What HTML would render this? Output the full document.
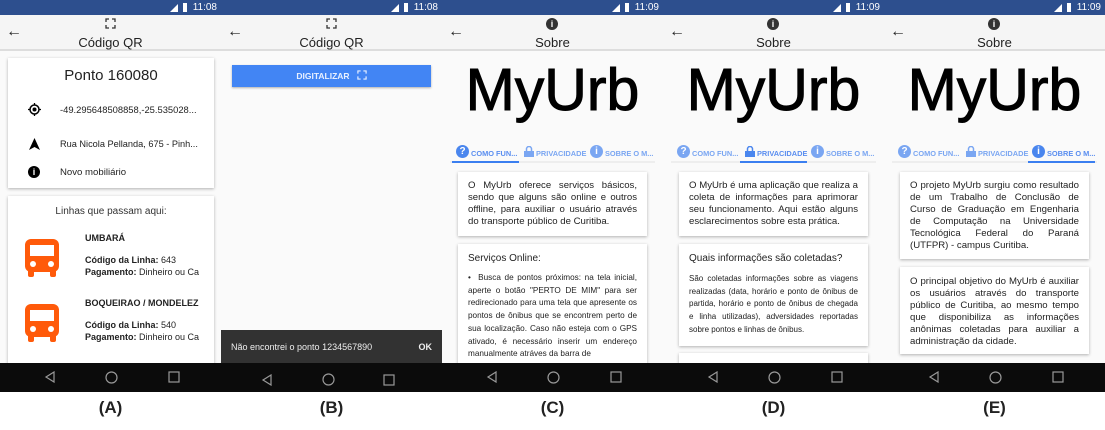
<!DOCTYPE html><html><head><meta charset="utf-8"><style>
*{margin:0;padding:0;box-sizing:border-box}
body{width:1105px;height:430px;background:#fff;font-family:"Liberation Sans",sans-serif;position:relative;overflow:hidden;color:#222}
.p{position:absolute;top:0;width:221px;height:392px;background:#fafafa;overflow:hidden}
.sb{position:absolute;top:0;left:0;right:0;height:15px;background:#2d4f8e;color:#fff;font-size:10px}
.sb .t{position:absolute;right:4px;top:2px}
.sb .sig{position:absolute;right:43px;top:4px;width:0;height:0;border-left:8px solid transparent;border-bottom:8px solid #fff}
.sb .bat{position:absolute;right:34px;top:3px;width:4px;height:9px;background:#fff}
.ab{position:absolute;top:15px;left:0;right:0;height:36px;background:#f5f5f5;border-bottom:2px solid #ddd}
.ab .bk{position:absolute;left:6px;top:8px;font-size:16px}
.ab .ti{position:absolute;left:0;right:0;top:20px;text-align:center;font-size:13px;color:#222}
.ab .ic{position:absolute;left:105px;top:3px;width:11px;height:11px}
.nb{position:absolute;top:363px;left:0;right:0;height:29px;background:#0b0b0b}
.nb svg{position:absolute;top:8px}
.lab{position:absolute;top:398px;width:221px;text-align:center;font-weight:bold;font-size:17px}
.card{position:absolute;background:#fff;box-shadow:0 1px 3px rgba(0,0,0,.3)}
.just{text-align:justify;font-size:9.6px;line-height:12px;color:#222}
.tabs{position:absolute;top:143px;left:8px;right:8px;height:20px;border-bottom:2px solid #eee;font-size:7.4px;color:#5a8ef0;font-weight:bold;white-space:nowrap}
.tabs span{position:absolute;top:6px}
.tabs .ul{position:absolute;top:18px;height:2px;width:67px;background:#3b7ff0}
.ci{position:absolute;top:2px;width:13px;height:13px;border-radius:50%;background:#4a86ee;color:#fff;font-size:10px;text-align:center;line-height:13px;font-weight:bold}
.lk{position:absolute;top:3px;width:10px;height:11px}
.big{position:absolute;top:56px;left:0;right:0;text-align:center;font-size:59px;color:#000;-webkit-text-stroke:1px #000}
</style></head><body>

<!-- Panel A -->
<div class="p" style="left:0">
<div class="sb"><div class="sig"></div><div class="bat"></div><span class="t">11:08</span></div>
<div class="ab"><span class="bk">←</span><svg class="ic" viewBox="0 0 11 11" fill="none" stroke="#333" stroke-width="1.3"><path d="M1 4V1h3M7 1h3v3M10 7v3H7M4 10H1V7"/></svg><div class="ti">Código QR</div></div>
<div class="card" style="left:8px;top:58px;width:206px;height:130px">
<div style="text-align:center;font-size:15px;margin-top:9px">Ponto 160080</div>
<svg style="position:absolute;left:20px;top:45px" width="13" height="13" viewBox="0 0 13 13"><circle cx="6.5" cy="6.5" r="4.5" fill="none" stroke="#000" stroke-width="1.5"/><circle cx="6.5" cy="6.5" r="2" fill="#000"/><path d="M6.5 0v2M6.5 11v2M0 6.5h2M11 6.5h2" stroke="#000" stroke-width="1.3"/></svg>
<div style="position:absolute;left:52px;top:46px;font-size:9.4px;white-space:nowrap">-49.295648508858,-25.535028...</div>
<svg style="position:absolute;left:21px;top:80px" width="11" height="12" viewBox="0 0 11 12"><path d="M5.5 0L11 12L5.5 9L0 12Z" fill="#000"/></svg>
<div style="position:absolute;left:52px;top:81px;font-size:9.2px;white-space:nowrap">Rua Nicola Pellanda, 675 - Pinh...</div>
<div style="position:absolute;left:20px;top:108px;width:12px;height:12px;border-radius:50%;background:#000;color:#fff;font-size:9px;font-weight:bold;text-align:center;line-height:12px">i</div>
<div style="position:absolute;left:52px;top:109px;font-size:9.6px">Novo mobiliário</div>
</div>
<div class="card" style="left:8px;top:196px;width:206px;height:180px">
<div style="text-align:center;font-size:10px;margin-top:10px;color:#333">Linhas que passam aqui:</div>
<svg style="position:absolute;left:17px;top:43px" width="34" height="38" viewBox="0 0 34 38"><rect x="0" y="0" width="34" height="33" rx="6" fill="#ff5a0a"/><rect x="5" y="6" width="24" height="11" fill="#fff"/><circle cx="8" cy="25" r="3" fill="#fff"/><circle cx="26" cy="25" r="3" fill="#fff"/><rect x="3" y="30" width="6" height="8" rx="2" fill="#ff5a0a"/><rect x="25" y="30" width="6" height="8" rx="2" fill="#ff5a0a"/></svg>
<div style="position:absolute;left:77px;top:37px;font-size:9px;font-weight:bold">UMBARÁ</div>
<div style="position:absolute;left:77px;top:58px;font-size:9px;line-height:12px;white-space:nowrap"><b>Código da Linha:</b> 643<br><b>Pagamento:</b> Dinheiro ou Ca</div>
<svg style="position:absolute;left:17px;top:108px" width="34" height="38" viewBox="0 0 34 38"><rect x="0" y="0" width="34" height="33" rx="6" fill="#ff5a0a"/><rect x="5" y="6" width="24" height="11" fill="#fff"/><circle cx="8" cy="25" r="3" fill="#fff"/><circle cx="26" cy="25" r="3" fill="#fff"/><rect x="3" y="30" width="6" height="8" rx="2" fill="#ff5a0a"/><rect x="25" y="30" width="6" height="8" rx="2" fill="#ff5a0a"/></svg>
<div style="position:absolute;left:77px;top:102px;font-size:9px;font-weight:bold">BOQUEIRAO / MONDELEZ</div>
<div style="position:absolute;left:77px;top:123px;font-size:9px;line-height:12px;white-space:nowrap"><b>Código da Linha:</b> 540<br><b>Pagamento:</b> Dinheiro ou Ca</div>
</div>
<div class="nb"><svg style="left:44px" width="12" height="12"><path d="M10 1L2 6L10 11Z" fill="none" stroke="#999" stroke-width="1.2"/></svg><svg style="left:105px" width="13" height="13"><circle cx="6.5" cy="6.5" r="5.5" fill="none" stroke="#999" stroke-width="1.2"/></svg><svg style="left:168px" width="12" height="12"><rect x="1" y="1" width="10" height="10" fill="none" stroke="#999" stroke-width="1.2"/></svg></div>
</div>

<!-- Panel B -->
<div class="p" style="left:221px">
<div class="sb"><div class="sig"></div><div class="bat"></div><span class="t">11:08</span></div>
<div class="ab"><span class="bk">←</span><svg class="ic" viewBox="0 0 11 11" fill="none" stroke="#333" stroke-width="1.3"><path d="M1 4V1h3M7 1h3v3M10 7v3H7M4 10H1V7"/></svg><div class="ti">Código QR</div></div>
<div style="position:absolute;left:11px;top:65px;width:199px;height:22px;background:#4285f4;box-shadow:0 1px 2px rgba(0,0,0,.3);color:#e8f0ff;font-size:8.5px;font-weight:bold;text-align:center;line-height:22px">DIGITALIZAR &nbsp;&nbsp;<svg width="10" height="10" viewBox="0 0 11 11" fill="none" stroke="#e8f0ff" stroke-width="1.3" style="vertical-align:-1px"><path d="M1 4V1h3M7 1h3v3M10 7v3H7M4 10H1V7"/></svg></div>
<div style="position:absolute;left:0;right:0;top:330px;height:33px;background:#323232;color:#eee;font-size:9px"><span style="position:absolute;left:10px;top:12px">Não encontrei o ponto 1234567890</span><span style="position:absolute;right:10px;top:12px;font-weight:bold">OK</span></div>
<div class="nb"><svg style="left:40px;top:11px" width="12" height="12"><path d="M10 1L2 6L10 11Z" fill="none" stroke="#999" stroke-width="1.2"/></svg><svg style="left:101px;top:10px" width="13" height="13"><circle cx="6.5" cy="6.5" r="5.5" fill="none" stroke="#999" stroke-width="1.2"/></svg><svg style="left:162px;top:11px" width="12" height="12"><rect x="1" y="1" width="10" height="10" fill="none" stroke="#999" stroke-width="1.2"/></svg></div>
</div>

<!-- Panel C -->
<div class="p" style="left:442px">
<div class="sb"><div class="sig"></div><div class="bat"></div><span class="t">11:09</span></div>
<div class="ab"><span class="bk">←</span><div class="ci" style="left:104px;top:3px;background:#333;width:12px;height:12px;line-height:12px;font-size:9px">i</div><div class="ti">Sobre</div></div>
<div class="big">MyUrb</div>
<div class="tabs"><div class="ci" style="left:6px">?</div><span style="left:21px">COMO FUN...</span><svg class="lk" style="left:74px" viewBox="0 0 10 11"><path d="M2.5 5V3a2.5 2.5 0 015 0v2" fill="none" stroke="#7aa6f2" stroke-width="1.5"/><rect y="5" width="10" height="6" fill="#7aa6f2"/></svg><span style="left:86px;color:#7aa6f2">PRIVACIDADE</span><div class="ci" style="left:140px;background:#7aa6f2">i</div><span style="left:155px;color:#7aa6f2">SOBRE O M...</span><div class="ul" style="left:2px"></div></div>
<div class="card just" style="left:16px;top:172px;width:189px;height:64px;padding:8px 10px">O MyUrb oferece serviços básicos, sendo que alguns são online e outros offline, para auxiliar o usuário através do transporte público de Curitiba.</div>
<div class="card" style="left:16px;top:244px;width:189px;height:130px;padding:9px 10px">
<div style="font-size:10px;color:#222;margin-bottom:8px">Serviços Online:</div>
<div class="just" style="font-size:8.2px;line-height:12.7px">• &nbsp;Busca de pontos próximos: na tela inicial, aperte o botão "PERTO DE MIM" para ser redirecionado para uma tela que apresente os pontos de ônibus que se encontrem perto de sua localização. Caso não esteja com o GPS ativado, é necessário inserir um endereço manualmente atráves da barra de</div></div>
<div class="nb"><svg style="left:44px" width="12" height="12"><path d="M10 1L2 6L10 11Z" fill="none" stroke="#999" stroke-width="1.2"/></svg><svg style="left:105px" width="13" height="13"><circle cx="6.5" cy="6.5" r="5.5" fill="none" stroke="#999" stroke-width="1.2"/></svg><svg style="left:168px" width="12" height="12"><rect x="1" y="1" width="10" height="10" fill="none" stroke="#999" stroke-width="1.2"/></svg></div>
</div>

<!-- Panel D -->
<div class="p" style="left:663px">
<div class="sb"><div class="sig"></div><div class="bat"></div><span class="t">11:09</span></div>
<div class="ab"><span class="bk">←</span><div class="ci" style="left:104px;top:3px;background:#333;width:12px;height:12px;line-height:12px;font-size:9px">i</div><div class="ti">Sobre</div></div>
<div class="big">MyUrb</div>
<div class="tabs"><div class="ci" style="left:6px;background:#7aa6f2">?</div><span style="left:21px;color:#7aa6f2">COMO FUN...</span><svg class="lk" style="left:74px" viewBox="0 0 10 11"><path d="M2.5 5V3a2.5 2.5 0 015 0v2" fill="none" stroke="#4a86ee" stroke-width="1.5"/><rect y="5" width="10" height="6" fill="#4a86ee"/></svg><span style="left:86px">PRIVACIDADE</span><div class="ci" style="left:140px;background:#7aa6f2">i</div><span style="left:155px;color:#7aa6f2">SOBRE O M...</span><div class="ul" style="left:69px"></div></div>
<div class="card just" style="left:16px;top:172px;width:189px;height:64px;padding:8px 10px">O MyUrb é uma aplicação que realiza a coleta de informações para aprimorar seu funcionamento. Aqui estão alguns esclarecimentos sobre esta prática.</div>
<div class="card" style="left:16px;top:244px;width:189px;height:102px;padding:9px 10px">
<div style="font-size:10px;color:#222;margin-bottom:9px">Quais informações são coletadas?</div>
<div class="just" style="font-size:8px;line-height:12.7px">São coletadas informações sobre as viagens realizadas (data, horário e ponto de ônibus de partida, horário e ponto de ônibus de chegada e linha utilizadas), adversidades reportadas sobre pontos e linhas de ônibus.</div></div>
<div class="card" style="left:16px;top:353px;width:189px;height:20px"></div>
<div class="nb"><svg style="left:44px" width="12" height="12"><path d="M10 1L2 6L10 11Z" fill="none" stroke="#999" stroke-width="1.2"/></svg><svg style="left:105px" width="13" height="13"><circle cx="6.5" cy="6.5" r="5.5" fill="none" stroke="#999" stroke-width="1.2"/></svg><svg style="left:168px" width="12" height="12"><rect x="1" y="1" width="10" height="10" fill="none" stroke="#999" stroke-width="1.2"/></svg></div>
</div>

<!-- Panel E -->
<div class="p" style="left:884px">
<div class="sb"><div class="sig"></div><div class="bat"></div><span class="t">11:09</span></div>
<div class="ab"><span class="bk">←</span><div class="ci" style="left:104px;top:3px;background:#333;width:12px;height:12px;line-height:12px;font-size:9px">i</div><div class="ti">Sobre</div></div>
<div class="big">MyUrb</div>
<div class="tabs"><div class="ci" style="left:6px;background:#7aa6f2">?</div><span style="left:21px;color:#7aa6f2">COMO FUN...</span><svg class="lk" style="left:74px" viewBox="0 0 10 11"><path d="M2.5 5V3a2.5 2.5 0 015 0v2" fill="none" stroke="#7aa6f2" stroke-width="1.5"/><rect y="5" width="10" height="6" fill="#7aa6f2"/></svg><span style="left:86px;color:#7aa6f2">PRIVACIDADE</span><div class="ci" style="left:140px">i</div><span style="left:155px">SOBRE O M...</span><div class="ul" style="left:136px"></div></div>
<div class="card just" style="left:16px;top:172px;width:189px;height:87px;padding:8px 10px">O projeto MyUrb surgiu como resultado de um Trabalho de Conclusão de Curso de Graduação em Engenharia de Computação na Universidade Tecnológica Federal do Paraná (UTFPR) - campus Curitiba.</div>
<div class="card just" style="left:16px;top:267px;width:189px;height:87px;padding:9px 10px">O principal objetivo do MyUrb é auxiliar os usuários através do transporte público de Curitiba, ao mesmo tempo que disponibiliza as informações anônimas coletadas para auxiliar a administração da cidade.</div>
<div class="nb"><svg style="left:44px" width="12" height="12"><path d="M10 1L2 6L10 11Z" fill="none" stroke="#999" stroke-width="1.2"/></svg><svg style="left:105px" width="13" height="13"><circle cx="6.5" cy="6.5" r="5.5" fill="none" stroke="#999" stroke-width="1.2"/></svg><svg style="left:168px" width="12" height="12"><rect x="1" y="1" width="10" height="10" fill="none" stroke="#999" stroke-width="1.2"/></svg></div>
</div>

<div class="lab" style="left:0">(A)</div>
<div class="lab" style="left:221px">(B)</div>
<div class="lab" style="left:442px">(C)</div>
<div class="lab" style="left:663px">(D)</div>
<div class="lab" style="left:884px">(E)</div>
</body></html>
